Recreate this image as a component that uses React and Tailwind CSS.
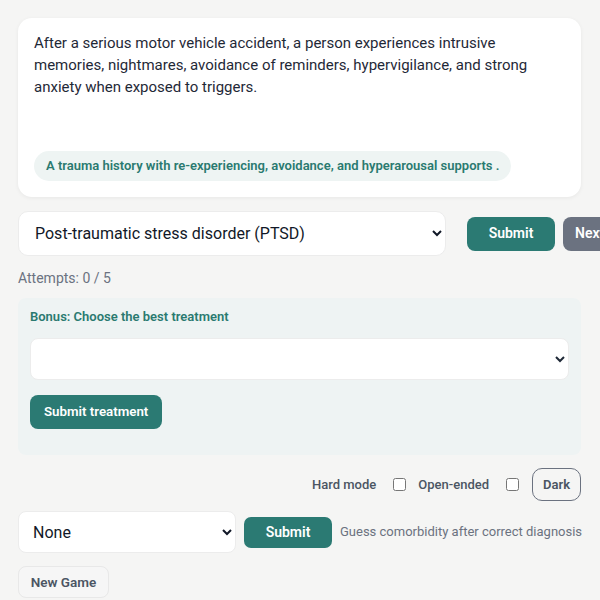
import React from "react";

export default function App() {
  const font = { fontFamily: "Roboto, 'Liberation Sans', sans-serif" };
  return (
    <div className="min-h-[600px] w-[600px] overflow-hidden bg-[#f5f5f4] text-[#1f2937]" style={font}>
      <div className="w-[581px] pl-[18px] pt-[18px]">
        <div className="rounded-[14px] bg-white px-4 pb-4 pt-[14px] shadow-[0_1px_4px_rgba(0,0,0,0.06)]">
          <p className="text-[15px] leading-[22px] text-[#1f2937]">
            After a serious motor vehicle accident, a person experiences intrusive memories, nightmares, avoidance of reminders, hypervigilance, and strong anxiety when exposed to triggers.
          </p>
          <div className="mt-[53px] inline-flex h-[30px] items-center rounded-full bg-[#eef4f3] px-3 text-[13px] font-semibold text-[#2a7a70]">
            A trauma history with re-experiencing, avoidance, and hyperarousal supports .
          </div>
        </div>

        <div className="mt-[14px] flex items-center">
          <select className="h-[45px] w-[428px] shrink-0 rounded-[10px] border border-[#ececec] bg-white pl-3 pr-2 text-[16px] text-[#111827] outline-none" defaultValue="ptsd">
            <option value="ptsd">Post-traumatic stress disorder (PTSD)</option>
          </select>
          <button className="ml-[21px] h-[34px] w-[88px] shrink-0 rounded-[8px] bg-[#2b7a73] text-[14px] font-semibold text-white">
            Submit
          </button>
          <button className="ml-[8px] h-[34px] w-[60px] shrink-0 rounded-[8px] bg-[#6b7280] pl-3 text-left text-[14px] font-semibold text-white">
            Next
          </button>
        </div>

        <div className="mt-[14px] text-[14px] leading-[16px] text-[#6b7280]">Attempts: 0 / 5</div>

        <div className="mt-[12px] h-[157px] rounded-[8px] bg-[#eef3f3] px-3 pt-[11px]">
          <div className="text-[13px] font-semibold leading-[16px] text-[#2a7a70]">Bonus: Choose the best treatment</div>
          <select className="mt-[13px] block h-[42px] w-full rounded-[8px] border border-[#ececec] bg-white px-2 text-[16px] outline-none" defaultValue="">
            <option value=""></option>
          </select>
          <button className="mt-[15px] h-[34px] rounded-[8px] bg-[#2b7a73] px-[14px] text-[13.3px] font-semibold text-white">
            Submit treatment
          </button>
        </div>

        <div className="mt-[13px] flex items-center justify-end text-[13px] font-medium text-[#4b5563]">
          <span>Hard mode</span>
          <input type="checkbox" className="ml-[17px] h-[13px] w-[13px]" />
          <span className="ml-3">Open-ended</span>
          <input type="checkbox" className="ml-[17px] h-[13px] w-[13px]" />
          <button className="ml-[13px] h-[33px] w-[49px] rounded-[10px] border border-[#6b7280] text-[13px] font-semibold text-[#4b5563]">
            Dark
          </button>
        </div>

        <div className="mt-[10px] flex items-center">
          <select className="h-[42px] w-[218px] shrink-0 rounded-[8px] border border-[#ececec] bg-white pl-[10px] pr-2 text-[16px] text-[#111827] outline-none" defaultValue="none">
            <option value="none">None</option>
          </select>
          <button className="ml-[8px] h-[31px] w-[88px] shrink-0 rounded-[7px] bg-[#2b7a73] text-[14px] font-semibold text-white">
            Submit
          </button>
          <span className="ml-[8px] whitespace-nowrap text-[13px] text-[#6b7280]">Guess comorbidity after correct diagnosis</span>
        </div>

        <button className="mt-[13px] h-[32px] w-[91px] rounded-[8px] border border-[#e8e8e8] bg-[#f6f6f6] text-[13.5px] font-semibold text-[#4b5563]">
          New Game
        </button>
      </div>
    </div>
  );
}
